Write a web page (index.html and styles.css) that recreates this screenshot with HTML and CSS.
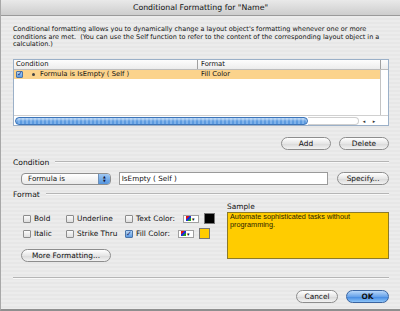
FILE: index.html
```html
<!DOCTYPE html>
<html lang="en">
  <head>
    <meta charset="UTF-8" />
    <title>Conditional Formatting</title>
    <link rel="stylesheet" href="styles.css">
  </head>
  <body>
    <div class="window">
      <div class="titlebar">Conditional Formatting for "Name"</div>
      <div class="content">
        <p class="desc">
          Conditional formatting allows you to dynamically change a layout object's formatting whenever one or more
          conditions are met.&nbsp; (You can use the Self function to refer to the content of the corresponding layout object in a
          calculation.)
        </p>
        <div class="list">
          <div class="list-head">
            <div class="col-cond">Condition</div>
            <div class="col-fmt">Format</div>
            <div class="col-end"></div>
          </div>
          <div class="list-body">
            <div class="list-rows">
              <div class="row selected">
                <div class="col-cond">
                  <span class="check on small">&#10003;</span>
                  <span class="bullet"></span>
                  Formula is IsEmpty ( Self )
                </div>
                <div class="col-fmt">Fill Color</div>
              </div>
            </div>
            <div class="vscroll"></div>
          </div>
          <div class="hscroll">
            <div class="thumb"></div>
            <div class="track"></div>
            <div class="arrows"><span>&#9666;</span><span>&#9656;</span></div>
          </div>
        </div>
        <div class="list-buttons">
          <button class="btn add">Add</button>
          <button class="btn delete">Delete</button>
        </div>

        <div class="section">
          <span>Condition</span>
          <div class="rule"></div>
        </div>
        <div class="cond-row">
          <div class="popup">
            <span>Formula is</span>
            <span class="stepper">&#9650;<br>&#9660;</span>
          </div>
          <div class="field">IsEmpty ( Self )</div>
          <button class="btn specify">Specify...</button>
        </div>

        <div class="section format-head">
          <span>Format</span>
          <div class="rule"></div>
        </div>
        <div class="format">
          <div class="format-left">
            <div class="opts">
              <label class="opt w-bold"><span class="check"></span>Bold</label>
              <label class="opt w-under"><span class="check"></span>Underline</label>
              <label class="opt"><span class="check"></span>Text Color:</label>
              <span class="color-pop"><i class="chip"></i>&#9662;</span>
              <span class="swatch black"></span>
            </div>
            <div class="opts">
              <label class="opt w-bold"><span class="check"></span>Italic</label>
              <label class="opt w-under"><span class="check"></span>Strike Thru</label>
              <label class="opt"><span class="check on">&#10003;</span>Fill Color:</label>
              <span class="color-pop"><i class="chip"></i>&#9662;</span>
              <span class="swatch yellow"></span>
            </div>
            <button class="btn more">More Formatting...</button>
          </div>
          <div class="sample">
            <div class="sample-label">Sample</div>
            <div class="sample-box">Automate sophisticated tasks without programming.</div>
          </div>
        </div>

        <div class="rule bottom-rule"></div>
        <div class="footer">
          <button class="btn cancel">Cancel</button>
          <button class="btn ok">OK</button>
        </div>
      </div>
    </div>
  </body>
</html>
```

FILE: styles.css
```css
* {
  box-sizing: border-box;
}
body {
  margin: 0;
  font-family: 'DejaVu Sans', sans-serif;
  color: #111;
}
.window {
  width: 400px;
  height: 311px;
  background: repeating-linear-gradient(#ececec 0, #ececec 2px, #e7e7e7 2px, #e7e7e7 4px);
  border-left: 1px solid #a8a8a8;
  border-bottom: 2px solid #8f8f8f;
  overflow: hidden;
}
.titlebar {
  height: 16px;
  line-height: 16px;
  text-align: center;
  font-size: 7.8px;
  background: linear-gradient(#e9e9e9, #cdcdcd);
  border-bottom: 1px solid #9a9a9a;
}
.content {
  padding: 0 11px 0 11px;
}
.desc {
  margin: 10px 0 0 1px;
  font-size: 6.5px;
  line-height: 7.5px;
  height: 33px;
}
/* list */
.list {
  height: 67px;
  margin-left: 1px;
  border: 1px solid #9bb0c8;
  background: #fff;
  display: flex;
  flex-direction: column;
}
.list-head {
  display: flex;
  height: 10px;
  line-height: 9px;
  font-size: 6.8px;
  background: linear-gradient(#fdfdfd, #ececec);
  border-bottom: 1px solid #bdbdbd;
}
.list-head .col-cond {
  width: 184px;
  padding-left: 2px;
  border-right: 1px solid #a0a0a0;
}
.list-head .col-fmt {
  flex: 1;
  padding-left: 3px;
}
.list-head .col-end {
  width: 8px;
  border-left: 1px solid #a0a0a0;
}
.list-body {
  flex: 1;
  display: flex;
}
.list-rows {
  flex: 1;
}
.vscroll {
  width: 8px;
  border-left: 1px solid #c4c4c4;
}
.row {
  display: flex;
  height: 9px;
  line-height: 9px;
  font-size: 6.8px;
}
.row.selected {
  background: #fbd38c;
}
.row .col-cond {
  width: 184px;
  display: flex;
  align-items: center;
  padding-left: 2px;
}
.row .col-fmt {
  padding-left: 3px;
}
.bullet {
  width: 3px;
  height: 3px;
  background: #444;
  border-radius: 50%;
  margin: 0 5px 0 6px;
}
.hscroll {
  height: 10px;
  display: flex;
  align-items: center;
  padding: 0 1px;
  border-top: 1px solid #d0d0d0;
}
.thumb {
  width: 293px;
  height: 8px;
  border-radius: 4px;
  background: repeating-linear-gradient(90deg, #5c9be0 0, #5c9be0 2px, #7fb2ea 2px, #7fb2ea 4px);
  border: 1px solid #3c74b8;
  box-shadow: inset 0 2px 2px rgba(255, 255, 255, 0.5);
}
.track {
  flex: 1;
  height: 8px;
  border-radius: 0 4px 4px 0;
  border: 1px solid #cfcfcf;
  border-left: none;
}
.arrows {
  width: 20px;
  display: flex;
  justify-content: space-around;
  font-size: 5px;
  color: #333;
  margin-right: 8px;
}
/* buttons */
.btn {
  font-family: 'DejaVu Sans', sans-serif;
  font-size: 7.4px;
  height: 13px;
  padding: 0;
  border: 1px solid #8d8d8d;
  border-radius: 7px;
  background: linear-gradient(#ffffff, #e6e6e6 50%, #d8d8d8 51%, #f2f2f2);
  color: #111;
}
.list-buttons {
  display: flex;
  justify-content: flex-end;
  gap: 8px;
  margin-top: 11px;
}
.add {
  width: 50px;
}
.delete {
  width: 50px;
}
/* sections */
.section {
  display: flex;
  align-items: center;
  font-size: 7.6px;
  margin-top: 6px;
  height: 12px;
}
.section span {
  margin: 0 6px 0 1px;
}
.rule {
  flex: 1;
  height: 2px;
  border-top: 1px solid #b5b5b5;
  border-bottom: 1px solid #f8f8f8;
}
.cond-row {
  display: flex;
  align-items: center;
  margin-top: 4px;
  height: 13px;
}
.popup {
  width: 90px;
  height: 12px;
  margin-left: 9px;
  display: flex;
  align-items: center;
  justify-content: space-between;
  border: 1px solid #8f8f8f;
  border-radius: 4px;
  background: linear-gradient(#fff, #e9e9e9);
  font-size: 7.2px;
  padding-left: 6px;
  overflow: hidden;
}
.stepper {
  width: 12px;
  height: 12px;
  background: linear-gradient(#a8cdf4, #4b8fdc);
  color: #113;
  font-size: 3.5px;
  line-height: 4px;
  text-align: center;
  padding-top: 2px;
  border-left: 1px solid #6d8fb6;
}
.field {
  width: 210px;
  height: 13px;
  margin-left: 8px;
  background: #fff;
  border: 1px solid #9a9a9a;
  font-size: 7.2px;
  line-height: 11px;
  padding-left: 2px;
}
.specify {
  width: 52px;
  margin-left: 9px;
}
.format-head {
  margin-top: 3px;
}
/* format */
.format {
  display: flex;
  margin-top: 2px;
}
.format-left {
  width: 215px;
  padding-top: 11px;
}
.opts {
  display: flex;
  align-items: center;
  height: 11px;
  margin-bottom: 4px;
  font-size: 7.4px;
  padding-left: 11px;
}
.opt {
  display: flex;
  align-items: center;
}
.w-bold {
  width: 43px;
}
.w-under {
  width: 59px;
}
.check {
  width: 8px;
  height: 8px;
  margin-right: 3px;
  border: 1px solid #8c8c8c;
  border-radius: 1px;
  background: linear-gradient(#fafafa, #dedede);
  font-size: 7px;
  line-height: 6px;
  text-align: center;
  color: #1a2a6a;
  font-weight: bold;
}
.check.on {
  background: linear-gradient(#b8d6f6, #5c9ae0);
  border-color: #4b74a8;
}
.check.small {
  width: 7px;
  height: 7px;
  line-height: 5px;
}
.color-pop {
  width: 16px;
  height: 8px;
  margin-left: 8px;
  background: #fff;
  border: 1px solid #a0a0a0;
  display: flex;
  align-items: center;
  font-size: 5px;
  padding-left: 2px;
  gap: 1px;
}
.chip {
  width: 5px;
  height: 5px;
  background: linear-gradient(135deg, #e01010 0, #e01010 33%, #2030d0 34%, #2030d0 66%, #20a020 67%);
}
.swatch {
  width: 11px;
  height: 11px;
  margin-left: 5px;
  border: 1px solid #777;
}
.swatch.black {
  background: #000;
}
.swatch.yellow {
  background: #ffcc00;
}
.more {
  width: 90px;
  margin: 2px 0 0 9px;
}
.sample {
  flex: 1;
}
.sample-label {
  font-size: 7.4px;
  height: 10px;
  line-height: 10px;
}
.sample-box {
  height: 47px;
  background: #ffcc00;
  border: 1px solid #8c7a2a;
  font-family: 'Liberation Sans', sans-serif;
  font-size: 7.3px;
  line-height: 7.6px;
  padding: 0 2px;
  color: #2a2200;
}
.bottom-rule {
  margin: 15px 0 0 1px;
}
.footer {
  display: flex;
  justify-content: flex-end;
  gap: 8px;
  margin-top: 11px;
}
.cancel {
  width: 42px;
}
.ok {
  width: 43px;
  border-color: #3a64a0;
  background: linear-gradient(#b9d8fa, #6aa4ea 50%, #3f86e0 51%, #8cc4f8);
  font-weight: bold;
}
```
